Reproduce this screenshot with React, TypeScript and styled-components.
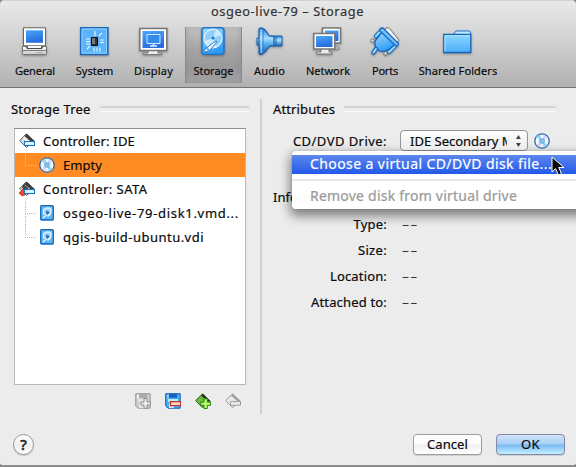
import React from 'react';
import styled, { createGlobalStyle } from 'styled-components';

const GlobalStyle = createGlobalStyle`
  * { box-sizing: border-box; }
  body { margin: 0; background: #8b8b8b; overflow: hidden; }
`;

const Window = styled.main`
  position: relative;
  width: 576px;
  height: 467px;
  display: flex;
  flex-direction: column;
  overflow: hidden;
  background: #ececec;
  border-bottom: 2px solid #8c8c8c;
  border-radius: 5px 5px 4px 4px;
  color: #0b0b0b;
  font: 13px/20px 'Noto Sans', 'Open Sans', sans-serif;
`;

const Text = styled.span<{ $spacing?: number; $size?: number }>`
  white-space: nowrap;
  letter-spacing: ${p => p.$spacing ?? 0}px;
  font-size: ${p => p.$size ?? 13}px;
  -webkit-text-stroke: 0.2px currentColor;
`;

const Header = styled.header`
  height: 88px;
  flex: none;
  border-top: 1px solid #d2d2d2;
  border-bottom: 1px solid #747474;
  background: linear-gradient(#e9e9e9, #d4d4d4 40%, #b1b1b1);
`;

const Title = styled.h1`
  margin: 0;
  height: 26px;
  padding: 0 0 0 211px;
  font-size: 13px;
  font-weight: 400;
  line-height: 21px;
  color: #333;
`;

const Toolbar = styled.nav`
  display: flex;
  padding-left: 5px;
`;

const Tool = styled.button<{ $width: number; $selected?: boolean }>`
  width: ${p => p.$width}px;
  height: 56px;
  margin-left: ${p => (p.$selected ? 2 : 0)}px;
  padding: 0;
  border: 0;
  display: flex;
  flex-direction: column;
  align-items: center;
  color: #0b0b0b;
  font: inherit;
  line-height: 20px;
  background: ${p => (p.$selected ? 'linear-gradient(#c2c2c2, #a2a2a2 45%, #989898 75%, #a3a3a3)' : 'none')};
  box-shadow: ${p => (p.$selected ? 'inset 1px 0 #8a8a8a, inset -1px 0 #8a8a8a, inset 3px 0 4px #8884, inset -3px 0 4px #8884' : 'none')};
  svg {
    display: block;
    margin: 0 1px 5px 0;
    filter: drop-shadow(0 1px 1px #0005);
  }
`;

const Content = styled.div`
  flex: 1;
  display: flex;
  padding: 11px 0 0 11px;
`;

const TreePane = styled.section`
  width: 251px;
  height: 315px;
  border-right: 2px solid #d2d2d2;
`;

const GroupTitle = styled.div<{ $width: number }>`
  display: flex;
  align-items: center;
  gap: 9px;
  width: ${p => p.$width}px;
  height: 20px;
  &::after {
    content: '';
    flex: 1;
    height: 3px;
    border-top: 2px solid #d3d3d3;
    border-bottom: 1px solid #fafafa;
  }
`;

const Tree = styled.div`
  width: 232px;
  height: 257px;
  margin: 9px 0 0 3px;
  border: 1px solid #b8b8b8;
  border-top-color: #8d8d8d;
  background: white;
`;

const TreeRow = styled.div<{ $selected?: boolean }>`
  display: flex;
  align-items: center;
  height: 24px;
  padding-left: 4px;
  background: ${p => (p.$selected ? '#ff8b25' : 'white')};
  svg { flex: none; }
`;

const Branch = styled.span<{ $last?: boolean; $dark?: boolean }>`
  align-self: stretch;
  width: 20px;
  padding-left: 6px;
  display: flex;
  flex-direction: column;
  &::before {
    content: '';
    width: 10px;
    height: 12px;
    border-left: 1px dotted ${p => (p.$dark ? '#e8c3a0' : '#b9b9b9')};
    border-bottom: 1px dotted ${p => (p.$dark ? '#e8c3a0' : '#b9b9b9')};
  }
  &::after {
    content: '';
    flex: 1;
    border-left: ${p => (p.$last ? '0' : '1px dotted #b9b9b9')};
  }
`;

const RowLabel = styled(Text)`
  margin-left: 8px;
`;

const TreeActions = styled.div`
  display: flex;
  gap: 14px;
  margin: 8px 0 0 124px;
  svg { display: block; }
`;

const Details = styled.section`
  flex: 1;
  padding-left: 11px;
`;

const DriveRow = styled.div`
  display: flex;
  align-items: center;
  height: 21px;
  margin-top: 11px;
`;

const FieldLabel = styled.div`
  width: 114px;
  margin-right: 13px;
  text-align: right;
  flex: none;
`;

const Select = styled.div`
  display: flex;
  align-items: center;
  width: 128px;
  height: 21px;
  padding: 0 5px 0 9px;
  border: 1px solid #969696;
  border-radius: 4px;
  background: linear-gradient(#fff, #f1f1f1 60%, #fff);
  margin-right: 6px;
`;

const SelectValue = styled.div`
  width: 99px;
  overflow: hidden;
  margin-right: 8px;
  display: flex;
`;

const Information = styled.div`
  margin-top: 36px;
`;

const DetailRow = styled.div`
  display: flex;
  height: 26px;
  align-items: center;
`;

const DetailList = styled.div`
  padding-top: 4px;
`;

const DashValue = styled(Text)`
  margin-left: 2px;
  color: #333;
  transform: scaleX(1.7);
  transform-origin: left;
`;

const Menu = styled.div`
  position: absolute;
  left: 292px;
  top: 151px;
  width: 300px;
  height: 58px;
  padding-top: 4px;
  border-radius: 4px;
  background: #fffffff8;
  box-shadow: 0 0 1px #0007, 0 5px 11px 2px #0007;
`;

const MenuItem = styled.div<{ $active?: boolean; $disabled?: boolean }>`
  display: flex;
  height: 19px;
  padding-left: 18px;
  line-height: 17px;
  color: ${p => (p.$active ? '#fff' : p.$disabled ? '#999' : '#111')};
  background: ${p => (p.$active ? 'linear-gradient(#5d87ee, #2259ea)' : 'none')};
`;

const Separator = styled.div`
  height: 2px;
  margin: 5px 0 6px;
  background: #e8e8e8;
`;

const Pointer = styled.svg`
  position: absolute;
  left: 551px;
  top: 156px;
`;

const Footer = styled.footer`
  display: flex;
  align-items: center;
  height: 32px;
  margin-bottom: 5px;
  padding: 0 11px 0 13px;
`;

const Help = styled.button`
  width: 21px;
  height: 21px;
  padding: 0;
  border: 1px solid #999;
  border-radius: 50%;
  background: linear-gradient(#fff, #eee 55%, #fff);
  box-shadow: 0 1px 1px #0003;
  color: #222;
  font: 15px/18px 'Noto Sans', sans-serif;
  -webkit-text-stroke: 0.6px currentColor;
  margin-right: auto;
`;

const PushButton = styled.button<{ $primary?: boolean }>`
  width: 69px;
  height: 21px;
  margin-left: 14px;
  padding: 0;
  border: 1px solid ${p => (p.$primary ? '#8087a8' : '#9c9c9c')};
  border-radius: 4px;
  background: ${p => (p.$primary ? 'linear-gradient(#d3e3f8, #a6cff5 48%, #78b8f2 52%, #c5f1ff)' : 'linear-gradient(#fff, #fafafa 48%, #f0f0f0 52%, #fff)')};
  box-shadow: 0 1px 1px #0002;
  color: #0b0b0b;
  font: inherit;
  line-height: 17px;
`;

const GradientDefs = styled.svg`
  position: absolute;
`;

function Gradients() {
  return (
    <GradientDefs width="0" height="0" aria-hidden="true">
      <defs>
        <linearGradient id="screen" x2="0.3" y2="1"><stop stopColor="#4ba7fa" /><stop offset="1" stopColor="#286ddf" /></linearGradient>
        <linearGradient id="sky" x2="0.4" y2="1"><stop stopColor="#a4ddff" /><stop offset="1" stopColor="#2d9bf4" /></linearGradient>
        <linearGradient id="folder" x2="0" y2="1"><stop stopColor="#8fd6ff" /><stop offset="1" stopColor="#4aaefa" /></linearGradient>
        <linearGradient id="cone" x2="0" y2="1"><stop stopColor="#2f83d6" /><stop offset=".4" stopColor="#a5dcff" /><stop offset=".6" stopColor="#5bb0f0" /><stop offset="1" stopColor="#1259ac" /></linearGradient>
        <linearGradient id="speaker" x2="0" y2="1"><stop stopColor="#2f86dc" /><stop offset=".4" stopColor="#b5e4ff" /><stop offset="1" stopColor="#1462b8" /></linearGradient>
        <linearGradient id="silver" x2="0" y2="1"><stop stopColor="#fff" /><stop offset="1" stopColor="#cacaca" /></linearGradient>
      </defs>
    </GradientDefs>
  );
}

const toolArt: Record<string, React.ReactNode> = {
  General: (
    <>
      <path d="M2.5 19.5h24v7q0 1-1 1h-22q-1 0-1-1z" fill="url(#silver)" stroke="#777" />
      <path d="M3 23.5h23" stroke="#777" />
      <path d="M16 25.5h7" stroke="#aaa" />
      <path d="M3.5 .8h22v18h-22z" fill="#fff" stroke="#666" />
      <path d="M6 3.3h17v12.5H6z" fill="url(#screen)" />
      <path d="M6 20h17l-1 2H7z" fill="#4b4b4b" />
      <path d="M8 19h13v2H8z" fill="#f8f8f8" />
    </>
  ),
  System: (
    <>
      <path d="M.8 .8h27v26.7H.8z" fill="#73c2ff" stroke="#1b67bd" strokeWidth="1.5" />
      <path d="M2 2h24.5v24H2z" fill="#5db3fb" stroke="#8ad1ff" />
      <path d="M11.5 10.5h6v8h-6z" fill="#333" stroke="#111" />
      <path d="M12 11h3v6h-3z" fill="#777" />
      <path d="M15 4v5M19 9l3-3M6 12h4M6 14.5h4M6 17h4M20 13h4M20 15.5h4M7 22l3-3M14 20.5v4M17 20.5v4M20 20.5v4" stroke="#ebf8ff" strokeWidth="1.1" />
    </>
  ),
  Display: (
    <>
      <path d="M9 23h10v3h4v1.5H4V26h5z" fill="#eee" stroke="#777" />
      <path d="M.8 1.5h27v22H.8z" fill="#fff" stroke="#777" strokeWidth="1.5" />
      <path d="M3.5 4h21.5v17H3.5z" fill="url(#screen)" />
      <path d="M8 7.5h13v9H8z" fill="#348bea" stroke="#cfe8ff" />
      <path d="M11 19h7M14.5 17v2" stroke="#d9efff" strokeWidth="1.5" />
    </>
  ),
  Storage: (
    <>
      <rect x="3" y=".8" width="22" height="26.5" rx="3" fill="url(#sky)" stroke="#1e75cc" strokeWidth="1.5" />
      <ellipse cx="14" cy="11.5" rx="9" ry="9.5" fill="#c9eaff" stroke="#eefaff" />
      <path d="M6 14A9 9 0 0 1 17 3L14 11M22 8a9 9 0 0 1-5 11l-3-8" fill="#92cef8" />
      <circle cx="14" cy="11" r="1.6" fill="#2279c7" />
      <path d="M7 25q-3-1-1-3 3-1 5-4l6-4q2 0 0 2l-5 6-2 2z" fill="#f5fcff" stroke="#267dcf" />
      <circle cx="9" cy="22.5" r="1.3" fill="#5aa6e6" />
    </>
  ),
  Audio: (
    <>
      <path d="M5 11H2v7h3zM14 9h13v10H14z" fill="url(#speaker)" stroke="#1760b0" />
      <path d="M4 3q0-2 2-2.2 4 .5 8 8q2 .7 5 .7v9q-3 0-5 1-4 7-8 8-2 0-2-2z" fill="url(#cone)" stroke="#1760b0" strokeWidth="1.2" />
      <path d="M6.2 2.5v23.5" stroke="#bfe7ff" />
      <path d="M8 2.5v23.5" stroke="#3282d0" />
      <path d="M21 10v8.500" stroke="#0b62b5" />
    </>
  ),
  Network: (
    <>
      <path d="M9.500 1h18v15H9.500z" fill="#fff" stroke="#777" strokeWidth="1.500" />
      <path d="M12 3.500h13.500v10.500H12z" fill="url(#screen)" />
      <path d="M20 17v3h6v2h-6z" fill="#ddd" stroke="#888" />
      <path d="M8 21h8v4h3v2H3.500v-2H8z" fill="#eee" stroke="#777" />
      <path d="M.8 6.500h21v15.500H.8z" fill="#fff" stroke="#777" strokeWidth="1.500" />
      <path d="M3 9h16.500v11H3z" fill="url(#screen)" />
    </>
  ),
  Ports: (
    <g strokeLinejoin="round">
      <path d="M16 1q2-1 4 1l8 10q2 2-1 3L15 3z" fill="#f3f3f3" stroke="#777" />
      <path d="M6 9l5-5M25 19l-6 6" stroke="#1f72c4" strokeWidth="4.500" strokeLinecap="round" />
      <path d="M6 9l5-5M25 19l-6 6" stroke="#9ad7ff" strokeWidth="2.200" strokeLinecap="round" />
      <path d="M12 5L5 14q-1 8 5 10 7 2 15-7z" fill="url(#sky)" stroke="#1764b9" strokeWidth="1.300" />
      <path d="M10 4q-1-3 3-3l15 15q1 3-2 3z" fill="#6fc2ff" stroke="#1768bf" strokeWidth="1.300" />
      <path d="M6 22l-2.500 3.500" stroke="#1869c2" strokeWidth="4.500" strokeLinecap="round" />
      <path d="M6 22l-2.500 3.500" stroke="#a5ddff" strokeWidth="2" strokeLinecap="round" />
      <circle cx="2.500" cy="13.500" r="1.700" fill="#ddd" stroke="#777" /><circle cx="15.500" cy="26.500" r="1.700" fill="#ddd" stroke="#777" />
    </g>
  ),
  'Shared Folders': (
    <>
      <path d="M10 8l3-4h13q1.500 0 1.500 2v5H10z" fill="#bde9ff" stroke="#2677cb" />
      <path d="M.8 7.500h27v18H.8z" fill="url(#folder)" stroke="#1765b7" strokeWidth="1.300" />
      <path d="M2 24.500V8.700h25" fill="none" stroke="#b9e8ff" />
    </>
  ),
};

const tools = [
  { name: 'General', width: 60, spacing: -0.08 },
  { name: 'System', width: 59, spacing: 0.02 },
  { name: 'Display', width: 59, spacing: 0.21 },
  { name: 'Storage', width: 57, spacing: 0 },
  { name: 'Audio', width: 55, spacing: 0.18 },
  { name: 'Network', width: 62, spacing: -0.04 },
  { name: 'Ports', width: 52, spacing: -0.2 },
  { name: 'Shared Folders', width: 94, spacing: 0.1 },
];

function Disc() {
  return (
    <svg width="16" height="16" viewBox="0 0 16 16">
      <circle cx="8" cy="8" r="7.2" fill="#f1f8fd" stroke="#2a69a8" strokeWidth="1.3" />
      <path d="M8 8L2 4a7 7 0 0 1 4-2.500zM8 8l6 4a7 7 0 0 1-4 2.500z" fill="#9ad0f1" />
      <path d="M8 8l2-6.500 4 3zM8 8l-2 6.500-4-3z" fill="#d9d3f5" />
      <circle cx="8" cy="8" r="2.800" fill="#4fadee" />
      <circle cx="8" cy="8" r="1.200" fill="#174f94" stroke="#f5fbff" strokeWidth=".8" />
    </svg>
  );
}

function Controller({ sata }: { sata?: boolean }) {
  return (
    <svg width="16" height="16" viewBox="0 0 16 16">
      <path d="M.7 7.500L7.200 1l8 7-7.700 6.500z" fill="#ddd" stroke="#555" />
      <path d="M5.500 3L8 .7l7 7-3 1z" fill="#3c3c3c" />
      <path d="M4.500 4l5 5" stroke={sata ? '#161616' : '#f5f5f5'} strokeWidth="1.500" />
      {sata && <><path d="M3 6l3-4 3 5-3 6z" fill="#4a4a4a" /><path d="M6 4l4 4" stroke="#aaa" strokeDasharray="1 1" /><path d="M0 12l4-4 2 2v4l-3 1z" fill="#ed4526" stroke="#bb2a18" strokeWidth=".6" /></>}
      <rect x="5.500" y="8.500" width="10" height="4" fill="#d9f2ff" stroke="#1572bf" />
    </svg>
  );
}

function Disk() {
  return (
    <svg width="16" height="16" viewBox="0 0 16 16">
      <rect x="1.700" y=".7" width="12.600" height="14.300" rx="1" fill="#5db5f4" stroke="#1268bd" strokeWidth="1.300" />
      <path d="M5 10Q3 4 7 3q6-1 5 3.500Q11 11 8 11" fill="#9fd4fa" stroke="#effaff" strokeWidth="1.200" />
      <path d="M5.500 12l4-4.500-2.500-1" fill="none" stroke="#1767b1" strokeWidth="1.500" />
      <path d="M4 13l4-3.500" stroke="#effaff" strokeWidth="1.400" />
    </svg>
  );
}

function DiskAction({ muted }: { muted?: boolean }) {
  return (
    <svg width="16" height="16" viewBox="0 0 16 16">
      <path d="M.7.7h14.500v14.500h-12L.7 13z" fill={muted ? '#ccc' : '#46b0f5'} stroke={muted ? '#999' : '#1458b2'} />
      <path d="M4 1h8v3.800H4z" fill={muted ? '#aaa' : '#1660c1'} />
      <path d="M3 6h10v3H3zM4 10h5v5H4z" fill={muted ? '#e4e4e4' : '#bee8ff'} />
      <path d="M2 1.500h2v4H2z" fill={muted ? '#eee' : '#8dccfa'} />
      {muted
        ? <path d="M9 5.500h3v3.500h3.500v3H12v3.300H9V12H6V9h3z" fill="#ededed" stroke="#8d8d8d" />
        : <path d="M5.500 8.700h10v4h-10z" fill="#ffd5c3" stroke="#c63624" strokeWidth="1.200" />}
    </svg>
  );
}

function ControllerAction({ muted }: { muted?: boolean }) {
  return (
    <svg width="16" height="16" viewBox="0 0 16 16">
      <path d="M.7 7.500L7.500 1l8 7.400-8.200 6.200z" fill={muted ? '#e9e9e9' : '#6dbd3c'} stroke={muted ? '#999' : '#25671c'} />
      <path d="M6 2.500L8 .7l7 7-2 1z" fill={muted ? '#a0a0a0' : '#302d25'} />
      {muted
        ? <path d="M5.500 8.700h10v3.500h-10z" fill="#eee" stroke="#999" />
        : <path d="M9 5.800h3.300v3.300h3.200v3.200h-3.200v3.200H9v-3.200H5.800V9.100H9z" fill="#b8fc75" stroke="#278014" />}
    </svg>
  );
}

const details = [
  { label: 'Type:', spacing: 0.22 },
  { label: 'Size:', spacing: 0.32 },
  { label: 'Location:', spacing: 0.15 },
  { label: 'Attached to:', spacing: 0.17 },
];

export default function App() {
  return (
    <>
      <GlobalStyle />
      <Window>
        <Gradients />
        <Header>
          <Title><Text $size={12.8} $spacing={0.58}>osgeo-live-79 – Storage</Text></Title>
          <Toolbar>
            {tools.map(t => (
              <Tool key={t.name} $width={t.width} $selected={t.name === 'Storage'}>
                <svg width="29" height="29" viewBox="0 0 29 29" fill="none">{toolArt[t.name]}</svg>
                <Text $size={11} $spacing={t.spacing}>{t.name}</Text>
              </Tool>
            ))}
          </Toolbar>
        </Header>
        <Content>
          <TreePane>
            <GroupTitle $width={238}><Text $spacing={0.2}>Storage Tree</Text></GroupTitle>
            <Tree>
              <TreeRow><Controller /><RowLabel $spacing={0.19}>Controller: IDE</RowLabel></TreeRow>
              <TreeRow $selected><Branch $last $dark /><Disc /><RowLabel $spacing={0.06}>Empty</RowLabel></TreeRow>
              <TreeRow><Controller sata /><RowLabel $spacing={0.46}>Controller: SATA</RowLabel></TreeRow>
              <TreeRow><Branch /><Disk /><RowLabel $spacing={0.69}>osgeo-live-79-disk1.vmd...</RowLabel></TreeRow>
              <TreeRow><Branch $last /><Disk /><RowLabel $spacing={0.48}>qgis-build-ubuntu.vdi</RowLabel></TreeRow>
            </Tree>
            <TreeActions>
              <DiskAction muted /><DiskAction /><ControllerAction /><ControllerAction muted />
            </TreeActions>
          </TreePane>
          <Details>
            <GroupTitle $width={283}><Text $spacing={0.13}>Attributes</Text></GroupTitle>
            <DriveRow>
              <FieldLabel><Text $spacing={0.45}>CD/DVD Drive:</Text></FieldLabel>
              <Select>
                <SelectValue><Text>IDE Secondary M</Text></SelectValue>
                <svg width="7" height="12" viewBox="0 0 7 12"><path d="M3.500 0L6 4H1zM3.500 12L6 8H1z" fill="#444" /></svg>
              </Select>
              <Disc />
            </DriveRow>
            <Information>
              <GroupTitle $width={283}><Text>Information</Text></GroupTitle>
              <DetailList>
                {details.map(d => (
                  <DetailRow key={d.label}>
                    <FieldLabel><Text $spacing={d.spacing}>{d.label}</Text></FieldLabel>
                    <DashValue $spacing={0.6}>--</DashValue>
                  </DetailRow>
                ))}
              </DetailList>
            </Information>
          </Details>
        </Content>
        <Footer>
          <Help aria-label="Help">?</Help>
          <PushButton><Text $spacing={0.08}>Cancel</Text></PushButton>
          <PushButton $primary><Text $spacing={0.3}>OK</Text></PushButton>
        </Footer>
        <Menu>
          <MenuItem $active><Text $size={14} $spacing={0.41}>Choose a virtual CD/DVD disk file...</Text></MenuItem>
          <Separator />
          <MenuItem $disabled><Text $size={14} $spacing={0.22}>Remove disk from virtual drive</Text></MenuItem>
        </Menu>
        <Pointer width="14" height="21" viewBox="0 0 14 21">
          <path d="M1 1v15l3.600-3.400L7.500 19l3-1.300-2.800-6.200H13z" fill="#070707" stroke="#fff" strokeWidth="1" />
        </Pointer>
      </Window>
    </>
  );
}
